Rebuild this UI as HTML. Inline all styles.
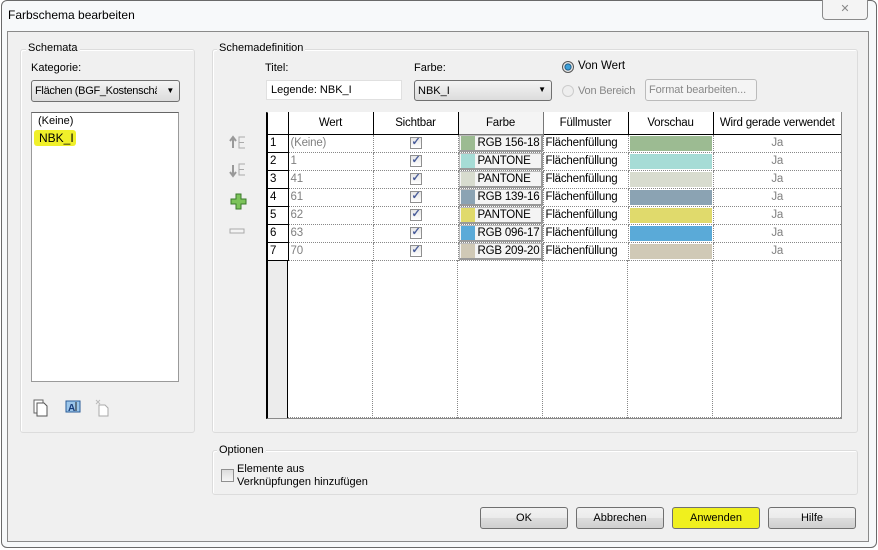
<!DOCTYPE html>
<html><head><meta charset="utf-8"><style>
*{box-sizing:border-box;margin:0;padding:0}
body{width:878px;height:550px;overflow:hidden;background:#fff;font-family:"Liberation Sans",sans-serif;font-size:11px;color:#000;position:relative}
.a{position:absolute}
.win{left:1px;top:0;width:876px;height:548px;border:1px solid #6a6a6a;border-radius:6px;background:#f7f9fa}
.inner{left:7px;top:31px;width:862px;height:511px;background:#f0f0f0;border:1px solid #8a8a8a}
.grp{border:1px solid #dcdcdc;border-radius:3px;box-shadow:inset 1px 1px 0 #fff}
.lbl{background:#f0f0f0;padding:0 2px;white-space:nowrap}
.btn{border:1px solid #707070;border-radius:3px;background:linear-gradient(#f2f2f2,#ebebeb 50%,#dddddd 51%,#cfcfcf);text-align:center;line-height:20px;height:22px}
table{border-collapse:collapse;table-layout:fixed}
td{height:18px;border-right:1px dotted #888;border-bottom:1px dotted #888;padding:0 2px;white-space:nowrap;overflow:hidden;font-size:11.5px;letter-spacing:-0.2px;background:#fff}
th{height:22px;font-weight:normal;border-right:1px solid #000;border-bottom:1px solid #000;background:#fff;font-size:11.5px;letter-spacing:-0.2px}
td.n{border-right:1px solid #000;border-bottom:1px solid #000;color:#000}
.g{color:#808080}
.cb{display:inline-block;width:12px;height:12px;border:1px solid #8f8f8f;background:linear-gradient(#e6e6e6,#fff);position:relative;vertical-align:middle}
.cb:after{content:"✓";position:absolute;left:1px;top:-3px;font-size:11px;color:#4a5d9a;font-weight:bold}
.sw{display:inline-block;width:14px;height:14px;vertical-align:middle;margin-right:3px}
.fc{padding:0;border-right:1px dotted #888}
.fc div{border:1px solid #bbb;border-right:2px solid #999;border-bottom:2px solid #999;height:17px;padding-left:1px;line-height:14px;background:#f4f4f4;overflow:hidden}
</style></head><body>
<div class="a win"></div>
<div class="a" style="left:8px;top:8px;font-size:12px">Farbschema bearbeiten</div>
<div class="a" style="left:822px;top:0;width:46px;height:20px;border:1px solid #8a8a8a;border-top:none;border-radius:0 0 4px 4px;background:#f4f4f4;text-align:center;color:#888;font-size:11px;line-height:18px">✕</div>
<div class="a inner"></div>

<div class="a grp" style="left:20px;top:49px;width:175px;height:384px"></div>
<div class="a lbl" style="left:26px;top:42px">Schemata</div>
<div class="a" style="left:31px;top:62px">Kategorie:</div>
<div class="a" style="left:31px;top:80px;width:149px;height:22px;border:1px solid #707070;border-radius:3px;background:linear-gradient(#f4f4f4,#dcdcdc);padding:4px 3px;white-space:nowrap;overflow:hidden;letter-spacing:-0.3px"><span style="display:inline-block;width:122px;overflow:hidden">Flächen (BGF_Kostenschät</span><span class="a" style="right:5px;top:5px;font-size:8px">▼</span></div>
<div class="a" style="left:31px;top:112px;width:148px;height:270px;background:#fff;border:1px solid #9a9a9a;border-top-color:#666"></div>
<div class="a" style="left:38px;top:115px">(Keine)</div>
<div class="a" style="left:34px;top:130px;width:42px;height:16px;background:#f0f02a;border-radius:3px"></div>
<div class="a" style="left:39px;top:131px;font-size:12px">NBK_I</div>
<svg class="a" style="left:33px;top:399px" width="100" height="18">
<rect x="1" y="1" width="9" height="13" fill="#fff" stroke="#666"/><path d="M4 4h7l3 3v10H4z" fill="#fff" stroke="#555"/>
<rect x="33" y="2" width="14" height="11" fill="#9cc6ea" stroke="#2a5d99"/><text x="35" y="12" font-size="10" font-weight="bold" fill="#1a3d7a" font-family="Liberation Sans">A</text><path d="M43 3v9" stroke="#222"/>
<path d="M66 6h6l3 3v8h-9z" fill="#fff" stroke="#aaa"/><path d="M63 1l4 4M67 1l-4 4" stroke="#bbb"/>
</svg>

<div class="a grp" style="left:212px;top:49px;width:646px;height:384px"></div>
<div class="a lbl" style="left:217px;top:42px">Schemadefinition</div>
<div class="a" style="left:265px;top:62px">Titel:</div>
<div class="a" style="left:266px;top:80px;width:136px;height:20px;background:#fff;border:1px solid #e0e0e0;padding:3px 4px">Legende: NBK_I</div>
<div class="a" style="left:414px;top:62px">Farbe:</div>
<div class="a" style="left:414px;top:80px;width:138px;height:21px;border:1px solid #707070;border-radius:3px;background:linear-gradient(#f4f4f4,#dcdcdc);padding:4px 3px">NBK_I<span class="a" style="right:5px;top:4px;font-size:8px">▼</span></div>
<div class="a" style="left:562px;top:61px;width:12px;height:12px;border-radius:50%;border:1px solid #555;background:radial-gradient(#3da0d8 30%,#16507a 45%,#e8e8e8 55%)"></div>
<div class="a" style="left:578px;top:60px;font-size:11.5px">Von Wert</div>
<div class="a" style="left:562px;top:85px;width:12px;height:12px;border-radius:50%;border:1px solid #ccc;background:#eee"></div>
<div class="a" style="left:578px;top:85px;font-size:11px;color:#888;letter-spacing:-0.2px">Von Bereich</div>
<div class="a" style="left:645px;top:79px;width:112px;height:22px;border:1px solid #bbb;border-radius:3px;background:#f4f4f4;color:#888;padding:4px 3px;white-space:nowrap;letter-spacing:-0.1px">Format bearbeiten...</div>

<svg class="a" style="left:228px;top:134px" width="22" height="110">
<path d="M5 14V4M2 7l3-4 3 4" stroke="#999" stroke-width="2" fill="none"/><path d="M17 3h-6v11h6M11 8.5h5" stroke="#aaa" fill="none"/>
<path d="M5 31v10M2 38l3 4 3-4" stroke="#999" stroke-width="2" fill="none"/><path d="M17 30h-6v11h6M11 35.5h5" stroke="#aaa" fill="none"/>
<path d="M3 65h5v-5h5v5h5v5h-5v5H8v-5H3z" fill="#7cc35a" stroke="#3a7a2a"/>
<rect x="2" y="95" width="14" height="4" fill="#f4f4f4" stroke="#aaa"/>
</svg>

<div class="a" style="left:266px;top:112px;width:576px;height:307px;background:#fff;border:1px solid #8a8a8a;border-left:2px solid #000"></div>
<div class="a" style="left:268px;top:134px;width:20px;height:284px;background:#ececec;border-right:1px solid #000"></div>
<div class="a" style="left:372px;top:260px;height:158px;border-left:1px dotted #888"></div>
<div class="a" style="left:457px;top:260px;height:158px;border-left:1px dotted #888"></div>
<div class="a" style="left:542px;top:260px;height:158px;border-left:1px dotted #888"></div>
<div class="a" style="left:627px;top:260px;height:158px;border-left:1px dotted #888"></div>
<div class="a" style="left:712px;top:260px;height:158px;border-left:1px dotted #888"></div>
<table class="a" style="left:268px;top:112px;width:573px">
<colgroup><col style="width:20px"><col style="width:85px"><col style="width:85px"><col style="width:85px"><col style="width:85px"><col style="width:85px"><col style="width:128px"></colgroup>
<tr><th></th><th>Wert</th><th>Sichtbar</th><th style="background:#f4f4f4;border-color:#777">Farbe</th><th>Füllmuster</th><th>Vorschau</th><th style="border-right:none">Wird gerade verwendet</th></tr>
<tr><td class="n">1</td><td class="g">(Keine)</td><td style="text-align:center"><span class="cb"></span></td><td class="fc"><div><span class="sw" style="background:#9cbb92"></span>RGB 156-18</div></td><td>Flächenfüllung</td><td style="padding:1px"><div style="background:#9cbb92;height:15px"></div></td><td class="g" style="text-align:center;border-right:none">Ja</td></tr>
<tr><td class="n">2</td><td class="g">1</td><td style="text-align:center"><span class="cb"></span></td><td class="fc"><div><span class="sw" style="background:#a6dcd6"></span>PANTONE</div></td><td>Flächenfüllung</td><td style="padding:1px"><div style="background:#a6dcd6;height:15px"></div></td><td class="g" style="text-align:center;border-right:none">Ja</td></tr>
<tr><td class="n">3</td><td class="g">41</td><td style="text-align:center"><span class="cb"></span></td><td class="fc"><div><span class="sw" style="background:#d8dccf"></span>PANTONE</div></td><td>Flächenfüllung</td><td style="padding:1px"><div style="background:#d8dccf;height:15px"></div></td><td class="g" style="text-align:center;border-right:none">Ja</td></tr>
<tr><td class="n">4</td><td class="g">61</td><td style="text-align:center"><span class="cb"></span></td><td class="fc"><div><span class="sw" style="background:#8ba3b3"></span>RGB 139-16</div></td><td>Flächenfüllung</td><td style="padding:1px"><div style="background:#8ba3b3;height:15px"></div></td><td class="g" style="text-align:center;border-right:none">Ja</td></tr>
<tr><td class="n">5</td><td class="g">62</td><td style="text-align:center"><span class="cb"></span></td><td class="fc"><div><span class="sw" style="background:#e0da6c"></span>PANTONE</div></td><td>Flächenfüllung</td><td style="padding:1px"><div style="background:#e0da6c;height:15px"></div></td><td class="g" style="text-align:center;border-right:none">Ja</td></tr>
<tr><td class="n">6</td><td class="g">63</td><td style="text-align:center"><span class="cb"></span></td><td class="fc"><div><span class="sw" style="background:#5aaad8"></span>RGB 096-17</div></td><td>Flächenfüllung</td><td style="padding:1px"><div style="background:#5aaad8;height:15px"></div></td><td class="g" style="text-align:center;border-right:none">Ja</td></tr>
<tr><td class="n">7</td><td class="g">70</td><td style="text-align:center"><span class="cb"></span></td><td class="fc"><div><span class="sw" style="background:#d0c9b6"></span>RGB 209-20</div></td><td>Flächenfüllung</td><td style="padding:1px"><div style="background:#d0c9b6;height:15px"></div></td><td class="g" style="text-align:center;border-right:none">Ja</td></tr>
</table>
<div class="a" style="left:288px;top:417px;width:553px;border-top:1px dotted #888"></div>

<div class="a grp" style="left:212px;top:450px;width:646px;height:45px"></div>
<div class="a lbl" style="left:217px;top:444px">Optionen</div>
<div class="a" style="left:221px;top:469px;width:13px;height:13px;border:1px solid #8f8f8f;background:linear-gradient(#ddd,#f6f6f6)"></div>
<div class="a" style="left:237px;top:463px;line-height:13px">Elemente aus<br>Verknüpfungen hinzufügen</div>

<div class="a btn" style="left:480px;top:507px;width:88px">OK</div>
<div class="a btn" style="left:576px;top:507px;width:88px">Abbrechen</div>
<div class="a btn" style="left:672px;top:507px;width:88px;background:#f0f01e">Anwenden</div>
<div class="a btn" style="left:768px;top:507px;width:88px">Hilfe</div>
</body></html>
